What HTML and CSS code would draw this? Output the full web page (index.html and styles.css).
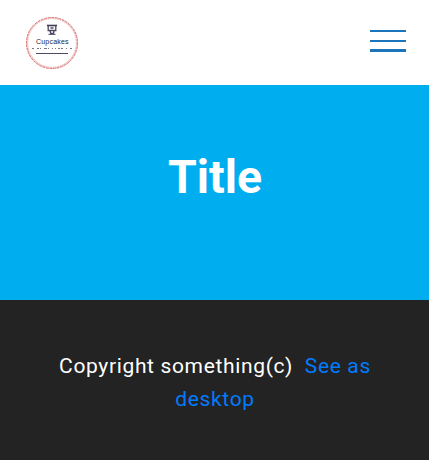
FILE: index.html
```html
<!DOCTYPE html>
<html lang="en">
<head>
<meta charset="utf-8">
<title>Cupcakes</title>
<link rel="stylesheet" href="styles.css">
</head>
<body>
<header class="navbar">
<svg class="logo" viewBox="0 0 54 54" aria-label="Cupcakes">
<circle cx="27" cy="27" r="25" fill="none" stroke="#f6dada" stroke-width="2.2"/>
<circle cx="27" cy="27" r="25.5" fill="none" stroke="#d97474" stroke-width="1" stroke-dasharray="2.6 1"/>
<circle cx="27" cy="27" r="24.4" fill="none" stroke="#e29a9a" stroke-width=".7" stroke-dasharray="1 1.4"/>
<path d="M22 9.5h10" stroke="#3f3b55" stroke-width="1.6"/>
<path d="M23.2 10v4.5h7.6V10M25.5 12h3M25 14.5l.8 3h2.6l.8-3" fill="none" stroke="#4c4862" stroke-width="1.3"/>
<path d="M23.5 18.3h7" stroke="#4c4862" stroke-width="1.1"/>
<text class="brand" x="11" y="27.5" textLength="32.5">Cupcakes</text>
<path d="M7 32.5h2m3 0h2m1 0h1m3 0h3m1 0h1m3 0h1m2 0h1m2 0h2m1 0h2m3 0h1m3 0h2" stroke="#77758a" stroke-width="1"/>
<path d="M11 37.5h32" stroke="#4f4b64" stroke-width="1"/>
</svg>
<button class="toggle" aria-label="Menu"><span></span><span></span><span></span></button>
</header>
<main class="hero"><h1>Title</h1></main>
<footer class="footer"><p>Copyright something(c)&nbsp; <a href="#">See as desktop</a></p></footer>
</body>
</html>
```
FILE: styles.css
```css
* { box-sizing: border-box; }
body { margin: 0; font-family: Roboto, sans-serif; background: #232323; }
.navbar { height: 85px; padding: 0 23px 0 25px; display: flex; justify-content: space-between; background: #fff; }
.logo { width: 54px; height: 54px; margin-top: 16px; }
.brand { font: 7px "Liberation Sans", sans-serif; fill: #25233a; }
.toggle { border: 0; padding: 0; background: none; width: 36px; height: 22px; margin-top: 30px; display: flex; flex-direction: column; }
.toggle span { width: 36px; height: 2px; margin-bottom: 8px; background: #1b75bc; }
.toggle span:nth-child(2) { margin-bottom: 7px; }
.toggle span:last-child { height: 3px; margin: 0; }
.hero { height: 215px; padding: 64px 0 0 1px; background: #00aef0; text-align: center; }
h1 { margin: 0; font-size: 46.4px; line-height: 56px; font-weight: 700; color: #fff; }
.footer { height: 160px; padding: 50px 30px 0 31px; text-align: center; color: #fff; }
.footer p { margin: 0; font-size: 21px; line-height: 33px; letter-spacing: .65px; }
.footer a { color: #007bff; text-decoration: none; }
```
